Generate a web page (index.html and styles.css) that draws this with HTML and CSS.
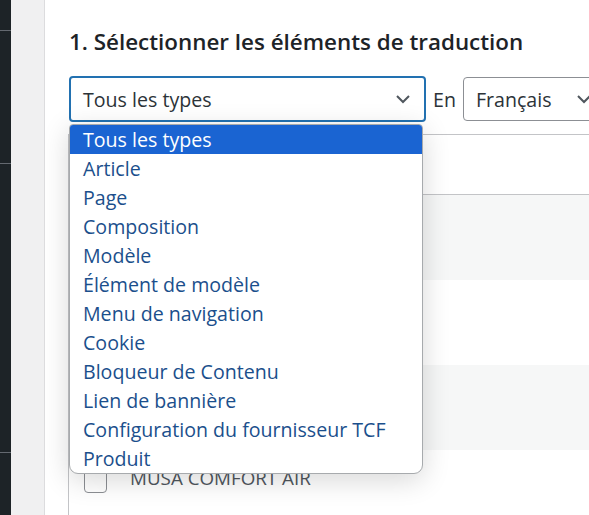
FILE: index.html
```html
<!DOCTYPE html>
<html lang="fr">
<head>
<meta charset="utf-8">
<title>Traduction</title>
<link rel="stylesheet" href="styles.css">
</head>
<body>
<div class="layout">
  <nav class="sidebar">
    <div class="sb-item sb-a"></div>
    <div class="sb-item sb-b"></div>
    <div class="sb-item sb-c"></div>
    <div class="sb-item sb-d"></div>
  </nav>
  <div class="gutter"></div>
  <main class="main">
    <h2 class="title">1. Sélectionner les éléments de traduction</h2>
    <div class="controls">
      <div class="select select-type">
        <span class="select-value">Tous les types</span>
        <svg class="chev" viewBox="0 0 16 16" width="16" height="16"><path d="M2 5l6 6 6-6" fill="none" stroke="#50575e" stroke-width="2"/></svg>
      </div>
      <span class="label-en">En</span>
      <div class="select select-lang">
        <span class="select-value">Français</span>
        <svg class="chev" viewBox="0 0 16 16" width="16" height="16"><path d="M2 5l6 6 6-6" fill="none" stroke="#50575e" stroke-width="2"/></svg>
      </div>
      <ul class="dropdown">
        <li class="opt selected">Tous les types</li>
        <li class="opt">Article</li>
        <li class="opt">Page</li>
        <li class="opt">Composition</li>
        <li class="opt">Modèle</li>
        <li class="opt">Élément de modèle</li>
        <li class="opt">Menu de navigation</li>
        <li class="opt">Cookie</li>
        <li class="opt">Bloqueur de Contenu</li>
        <li class="opt">Lien de bannière</li>
        <li class="opt">Configuration du fournisseur TCF</li>
        <li class="opt">Produit</li>
      </ul>
    </div>
    <div class="table">
      <div class="thead"></div>
      <div class="row alt"></div>
      <div class="row"></div>
      <div class="row alt"></div>
      <div class="row">
        <span class="checkbox"></span>
        <span class="row-name">MUSA COMFORT AIR</span>
      </div>
    </div>
  </main>
</div>
</body>
</html>
```
FILE: styles.css
```css
html, body {
  margin: 0;
  padding: 0;
  background: #fff;
  overflow: hidden;
}
body {
  font-family: "Open Sans", "Noto Sans", sans-serif;
  color: #1d2327;
}
.layout {
  display: flex;
  height: 515px;
}
.sidebar {
  width: 11px;
  background: #1d2327;
  display: flex;
  flex-direction: column;
  flex: none;
}
.sb-item { border-bottom: 1px solid #646970; }
.sb-a { height: 30px; }
.sb-b { height: 132px; }
.sb-c { height: 288px; }
.sb-d { border-bottom: none; flex: 1; }
.gutter {
  width: 33px;
  background: #f0f0f1;
  border-right: 1px solid #dcdcde;
  flex: none;
}
.main {
  flex: 1;
  padding-left: 24px;
  min-width: 0;
  overflow: hidden;
}
.title {
  margin: 0;
  padding-top: 27px;
  font-size: 22.4px;
  line-height: 29px;
  font-weight: 600;
  color: #1d2327;
  white-space: nowrap;
}
.controls {
  position: relative;
  display: flex;
  align-items: center;
  margin-top: 20px;
  height: 46px;
}
.select {
  box-sizing: border-box;
  display: flex;
  align-items: center;
  justify-content: space-between;
  border-radius: 4px;
  background: #fff;
  font-size: 19.6px;
  color: #2c3338;
  flex: none;
}
.select-type {
  width: 357px;
  height: 46px;
  border: 2px solid #2271b1;
  padding: 0 13px 0 12px;
}
.select-lang {
  width: 140px;
  height: 44px;
  border: 1px solid #8c8f94;
  padding: 0 10px 0 12px;
}
.chev { flex: none; }
.label-en {
  font-size: 19.6px;
  color: #2c3338;
  margin: 0 7px 0 7px;
}
.dropdown {
  position: absolute;
  left: 0;
  top: 48px;
  width: 354px;
  box-sizing: border-box;
  margin: 0;
  padding: 0;
  list-style: none;
  background: #fff;
  border: 1px solid #a7aaad;
  border-radius: 4px 4px 9px 9px;
  box-shadow: 0 6px 28px rgba(0, 0, 0, 0.16);
  overflow: hidden;
  z-index: 2;
}
.opt {
  height: 29px;
  line-height: 29px;
  padding-left: 13px;
  font-size: 19.6px;
  color: #1b4f8c;
  white-space: nowrap;
}
.opt.selected {
  background: #1a64d2;
  color: #fff;
}
.table {
  margin-top: 12px;
  margin-left: -1px;
  border-top: 1px solid #c3c4c7;
  border-left: 1px solid #c3c4c7;
}
.thead {
  height: 59px;
  border-bottom: 1px solid #c3c4c7;
}
.row {
  height: 85px;
  display: flex;
  align-items: flex-start;
  background: #fff;
}
.row.alt { background: #f6f7f7; }
.checkbox {
  box-sizing: border-box;
  width: 23px;
  height: 23px;
  border: 1px solid #8c8f94;
  border-radius: 4px;
  margin: 20px 0 0 15px;
  background: #fff;
  flex: none;
}
.row-name {
  margin: 15px 0 0 23px;
  font-size: 18.8px;
  color: #50575e;
}
```
